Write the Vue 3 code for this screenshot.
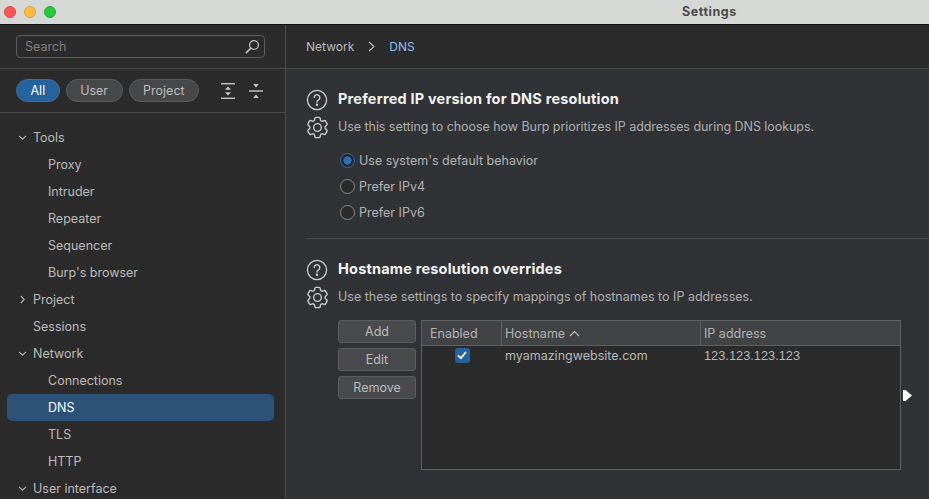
<script setup>
import { ref } from "vue"

const filters = ["All", "User", "Project"]
const activeFilter = ref("All")

const tree = [
  { label: "Tools", arrow: "down", level: 0 },
  { label: "Proxy", level: 1 },
  { label: "Intruder", level: 1 },
  { label: "Repeater", level: 1 },
  { label: "Sequencer", level: 1 },
  { label: "Burp's browser", level: 1 },
  { label: "Project", arrow: "right", level: 0 },
  { label: "Sessions", level: 0 },
  { label: "Network", arrow: "down", level: 0 },
  { label: "Connections", level: 1 },
  { label: "DNS", level: 1, active: true },
  { label: "TLS", level: 1 },
  { label: "HTTP", level: 1 },
  { label: "User interface", arrow: "down", level: 0 }
]

const ipOptions = ["Use system's default behavior", "Prefer IPv4", "Prefer IPv6"]
const ipChoice = ref(ipOptions[0])

const gearPath =
  "M9.594 3.94c.09-.542.56-.94 1.11-.94h2.593c.55 0 1.02.398 1.11.94l.213 1.281c.063.374.313.686.645.87.074.04.147.083.22.127.325.196.72.257 1.075.124l1.217-.456a1.125 1.125 0 0 1 1.37.49l1.296 2.247a1.125 1.125 0 0 1-.26 1.431l-1.003.827c-.293.241-.438.613-.43.992a7.723 7.723 0 0 1 0 .255c-.008.378.137.75.43.991l1.004.827c.424.35.534.955.26 1.43l-1.298 2.247a1.125 1.125 0 0 1-1.369.491l-1.217-.456c-.355-.133-.75-.072-1.076.124a6.47 6.47 0 0 1-.22.128c-.331.183-.581.495-.644.869l-.213 1.281c-.09.543-.56.94-1.11.94h-2.594c-.55 0-1.019-.398-1.11-.94l-.213-1.281c-.062-.374-.312-.686-.644-.87a6.52 6.52 0 0 1-.22-.127c-.325-.196-.72-.257-1.076-.124l-1.217.456a1.125 1.125 0 0 1-1.369-.49l-1.297-2.247a1.125 1.125 0 0 1 .26-1.431l1.004-.827c.292-.24.437-.613.43-.991a6.932 6.932 0 0 1 0-.255c.007-.38-.138-.751-.43-.992l-1.004-.827a1.125 1.125 0 0 1-.26-1.43l1.297-2.247a1.125 1.125 0 0 1 1.37-.491l1.216.456c.356.133.751.072 1.076-.124.072-.044.146-.086.22-.128.332-.183.582-.495.644-.869l.214-1.28Z"
</script>

<template>
  <div class="window">
    <header class="titlebar">
      <div class="lights">
        <span class="light red"></span>
        <span class="light yellow"></span>
        <span class="light green"></span>
      </div>
      <span class="title">Settings</span>
    </header>

    <div class="body">
      <aside class="sidebar">
        <div class="search-wrap">
          <div class="search">
            <span>Search</span>
            <svg width="15" height="15" viewBox="0 0 15 15" fill="none" stroke="#c4c4c4" stroke-width="1.2">
              <circle cx="9" cy="6" r="4.4" />
              <path d="M5.800 9.200 1.400 13.600" stroke-width="1.6" stroke-linecap="round" />
            </svg>
          </div>
        </div>

        <div class="filters">
          <button
            v-for="f in filters"
            :key="f"
            class="pill"
            :class="{ on: f === activeFilter }"
            @click="activeFilter = f"
          >{{ f }}</button>
          <div class="expanders">
            <svg width="14" height="16" viewBox="0 0 14 16" fill="#c8c8c8">
              <rect y="0" width="14" height="1.4" />
              <rect y="14.600" width="14" height="1.4" />
              <path d="M7 3.500 10 6.800H4zM7 12.500 4 9.200H10z" />
            </svg>
            <svg width="14" height="16" viewBox="0 0 14 16" fill="#c8c8c8">
              <rect y="7.300" width="14" height="1.4" />
              <path d="M7 4.400 4.200 1H9.800zM7 11.600 9.800 15H4.200z" />
            </svg>
          </div>
        </div>

        <nav class="tree">
          <div
            v-for="item in tree"
            :key="item.label"
            class="row"
            :class="[item.level ? 'child' : 'top', { active: item.active }]"
          >
            <svg
              v-if="item.arrow"
              class="arrow"
              :class="item.arrow"
              width="9"
              height="9"
              viewBox="0 0 9 9"
              fill="none"
              stroke="#b5b5b5"
              stroke-width="1.1"
            >
              <path d="M1 2.800 4.500 6.200 8 2.800" />
            </svg>
            <span>{{ item.label }}</span>
          </div>
        </nav>
      </aside>

      <main class="content">
        <div class="crumbs">
          <span>Network</span>
          <svg width="7" height="11" viewBox="0 0 7 11" fill="none" stroke="#c0c0c0" stroke-width="1.1">
            <path d="M1 1 6 5.500 1 10" />
          </svg>
          <span class="current">DNS</span>
        </div>

        <section class="section first">
          <div class="head">
            <svg class="help" width="22" height="22" viewBox="0 0 22 22" fill="none" stroke="#cfcfcf" stroke-width="1.3">
              <circle cx="11" cy="11" r="9.600" />
              <path d="M8.200 8.600a2.800 2.800 0 1 1 4.300 2.300c-1 .6-1.500 1.100-1.500 2.300" stroke-linecap="round" />
              <circle cx="11" cy="15.800" r=".6" fill="#cfcfcf" />
            </svg>
            <h2>Preferred IP version for DNS resolution</h2>
          </div>
          <div class="desc">
            <svg class="gear" width="27" height="27" viewBox="0 0 24 24" fill="none" stroke="#cfcfcf" stroke-width="1.200">
              <path :d="gearPath" />
              <circle cx="12" cy="12" r="3.400" />
            </svg>
            <p>Use this setting to choose how Burp prioritizes IP addresses during DNS lookups.</p>
          </div>
          <div class="radios">
            <label v-for="o in ipOptions" :key="o" class="radio" @click="ipChoice = o">
              <span class="dot" :class="{ on: ipChoice === o }"></span>
              <span>{{ o }}</span>
            </label>
          </div>
        </section>

        <section class="section second">
          <div class="head">
            <svg class="help" width="22" height="22" viewBox="0 0 22 22" fill="none" stroke="#cfcfcf" stroke-width="1.3">
              <circle cx="11" cy="11" r="9.600" />
              <path d="M8.200 8.600a2.800 2.800 0 1 1 4.300 2.300c-1 .6-1.500 1.100-1.500 2.300" stroke-linecap="round" />
              <circle cx="11" cy="15.800" r=".6" fill="#cfcfcf" />
            </svg>
            <h2>Hostname resolution overrides</h2>
          </div>
          <div class="desc">
            <svg class="gear" width="27" height="27" viewBox="0 0 24 24" fill="none" stroke="#cfcfcf" stroke-width="1.200">
              <path :d="gearPath" />
              <circle cx="12" cy="12" r="3.400" />
            </svg>
            <p>Use these settings to specify mappings of hostnames to IP addresses.</p>
          </div>

          <div class="editor">
            <div class="buttons">
              <button class="btn">Add</button>
              <button class="btn">Edit</button>
              <button class="btn">Remove</button>
            </div>
            <div class="table">
              <div class="thead">
                <div class="cell c1">Enabled</div>
                <div class="cell c2">
                  Hostname
                  <svg width="11" height="7" viewBox="0 0 11 7" fill="none" stroke="#bdbdbd" stroke-width="1.100">
                    <path d="M1 6 5.500 1.500 10 6" />
                  </svg>
                </div>
                <div class="cell c3">IP address</div>
              </div>
              <div class="tr">
                <div class="td c1">
                  <span class="check">
                    <svg width="10" height="9" viewBox="0 0 10 9" fill="none" stroke="#fff" stroke-width="1.800" stroke-linecap="round" stroke-linejoin="round">
                      <path d="M1.500 4.800 3.900 7.200 8.500 1.500" />
                    </svg>
                  </span>
                </div>
                <div class="td c2">myamazingwebsite.com</div>
                <div class="td c3 nums">123.123.123.123</div>
              </div>
            </div>
            <svg class="pointer" width="9" height="11" viewBox="0 0 9 11" fill="#fff">
              <path d="M0 0H2.500L9 5.500 2.500 11H0z" />
            </svg>
          </div>
        </section>
      </main>
    </div>
  </div>
</template>

<style scoped>
.window {
  width: 929px;
  height: 499px;
  overflow: hidden;
  display: flex;
  flex-direction: column;
  font-family: Inter, "Liberation Sans", sans-serif;
  font-size: 12.5px;
  color: #bdbdbd;
  background: #313235;
}
.titlebar {
  height: 24px;
  flex: none;
  display: flex;
  align-items: center;
  background: #d6d8d6;
  border-bottom: 1px solid #111;
}
.lights {
  display: flex;
  gap: 8px;
  padding-left: 4px;
  width: 682px;
  box-sizing: border-box;
}
.light {
  width: 12px;
  height: 12px;
  border-radius: 50%;
  box-sizing: border-box;
}
.red { background: #fc5753; border: 1px solid #df4744; }
.yellow { background: #fdbc40; border: 1px solid #de9f34; }
.green { background: #28c840; border: 1px solid #27aa35; }
.title {
  margin-bottom: 2px;
  font-size: 12.5px;
  font-weight: 700;
  color: #4a4a4a;
  letter-spacing: 0.55px;
}
.body {
  flex: 1;
  display: flex;
  min-height: 0;
}
.sidebar {
  width: 286px;
  flex: none;
  box-sizing: border-box;
  background: #2b2b2b;
  border-right: 1px solid #4a4a4a;
}
.search-wrap {
  height: 44px;
  box-sizing: border-box;
  padding: 10px 20px 0 16px;
  border-bottom: 1px solid #4a4a4a;
}
.search {
  height: 23px;
  box-sizing: border-box;
  display: flex;
  align-items: center;
  justify-content: space-between;
  padding: 0 4px 0 8px;
  border: 1px solid #5c5c5c;
  border-radius: 4px;
  color: #808080;
}
.filters {
  height: 44px;
  box-sizing: border-box;
  display: flex;
  align-items: center;
  gap: 6px;
  padding-left: 16px;
  border-bottom: 1px solid #4a4a4a;
}
.pill {
  height: 23px;
  padding: 0 13.500px;
  border: 1px solid #5c5e60;
  border-radius: 12px;
  background: #46484a;
  color: #bdbdbd;
  font: inherit;
}
.pill.on {
  background: #25639f;
  border-color: #4a6b8c;
  color: #fff;
}
.expanders {
  display: flex;
  gap: 14px;
  margin-left: 16px;
}
.tree {
  padding-top: 11px;
}
.row {
  position: relative;
  height: 27px;
  margin: 0 11px 0 7px;
  display: flex;
  align-items: center;
  border-radius: 5px;
  color: #bcbcbc;
}
.row.top { padding-left: 26px; }
.row.child { padding-left: 41px; }
.row.active {
  background: #2c5278;
  color: #fff;
}
.arrow {
  position: absolute;
  left: 11px;
  top: 9px;
}
.arrow.right { transform: rotate(-90deg); }
.content {
  flex: 1;
  min-width: 0;
}
.crumbs {
  height: 44px;
  box-sizing: border-box;
  display: flex;
  align-items: center;
  gap: 14px;
  padding-left: 20px;
  background: #2b2b2b;
  border-bottom: 1px solid #4a4a4a;
  color: #bcbcbc;
  font-size: 12px;
}
.crumbs .current { color: #8fc0f0; }
.section { margin-left: 20px; }
.section.first {
  height: 170px;
  box-sizing: border-box;
  padding-top: 20px;
  border-bottom: 1px solid #4d4d4f;
}
.section.second { padding-top: 20px; }
.head, .desc {
  display: flex;
  align-items: center;
  gap: 10px;
  height: 22px;
}
.desc { margin-top: 5px; }
.gear { margin: 0 -2.500px; flex: none; }
h2 {
  margin: 0 0 3px;
  font-size: 14.500px;
  font-weight: 700;
  letter-spacing: 0.2px;
  color: #f2f2f2;
}
p {
  margin: 0 0 1px;
  font-size: 12.5px;
  color: #b0b0b0;
}
.first p { letter-spacing: -0.05px; }
.radios {
  margin: 9px 0 0 34px;
}
.radio {
  height: 26px;
  display: flex;
  align-items: center;
  gap: 4px;
  color: #b4b4b4;
}
.dot {
  width: 15px;
  height: 15px;
  box-sizing: border-box;
  border: 1px solid #8a8a8a;
  border-radius: 50%;
  background: #2b2b2b;
}
.dot.on {
  border: 1px solid #2d6cae;
  background: radial-gradient(circle, #2d6fb0 0 3.800px, #26282b 4.400px);
}
.editor {
  position: relative;
  display: flex;
  gap: 5px;
  margin: 12px 0 0 32px;
}
.buttons {
  width: 78px;
  display: flex;
  flex-direction: column;
  gap: 5px;
}
.btn {
  height: 23px;
  padding: 0;
  border: 1px solid #5a5c5e;
  border-radius: 3px;
  background: #484a4c;
  color: #bdbdbd;
  font: inherit;
}
.table {
  width: 480px;
  height: 150px;
  box-sizing: border-box;
  border: 1px solid #5f6062;
  background: #2b2b2b;
}
.thead {
  display: flex;
  height: 25px;
  box-sizing: border-box;
  background: #424345;
  border-bottom: 1px solid #5f6062;
}
.tr {
  display: flex;
  height: 18px;
  align-items: center;
}
.c1 { width: 80px; flex: none; }
.c2 { width: 199px; flex: none; }
.c3 { flex: 1; }
.cell {
  display: flex;
  align-items: center;
  gap: 4px;
  padding-left: 8px;
  box-sizing: border-box;
  color: #b4b4b4;
}
.cell.c1, .cell.c2 { border-right: 1px solid #5f6062; }
.cell.c2, .cell.c3 { padding-left: 3px; }
.td {
  box-sizing: border-box;
  padding-left: 3px;
  color: #b8b8b8;
}
.td.c1 {
  display: flex;
  justify-content: center;
  padding-left: 0;
}
.nums {
  font-family: "Liberation Sans", sans-serif;
  font-size: 12.800px;
}
.check {
  width: 15px;
  height: 15px;
  display: flex;
  align-items: center;
  justify-content: center;
  border-radius: 3px;
  background: #25639f;
}
.pointer {
  position: absolute;
  left: 565px;
  top: 70px;
}
</style>

<style>
html, body {
  margin: 0;
  background: #313235;
}
</style>
